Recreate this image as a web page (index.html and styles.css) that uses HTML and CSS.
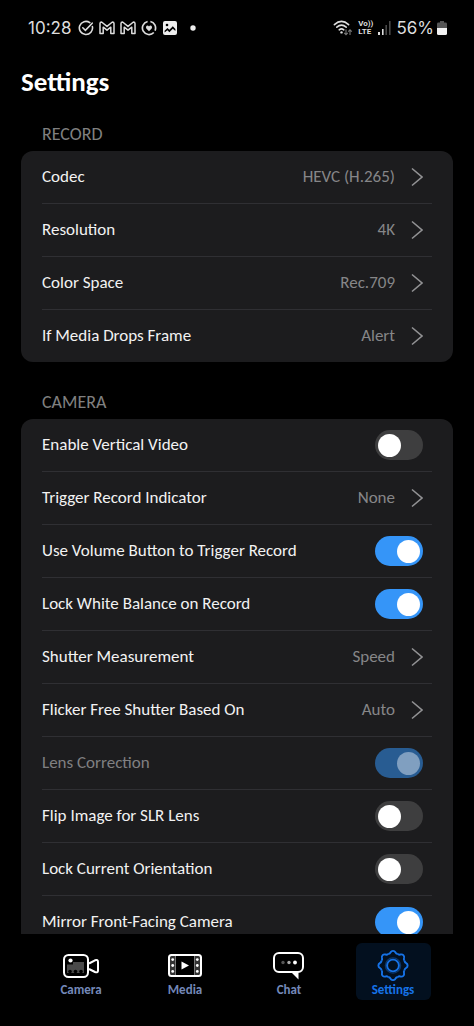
FILE: index.html
```html
<!DOCTYPE html>
<html lang="en">
<head>
<meta charset="utf-8">
<meta name="viewport" content="width=device-width, initial-scale=1">
<title>Settings</title>
<link rel="stylesheet" href="styles.css">
</head>
<body>
<div class="app">
  <header class="status">
    <div class="status-side">
      <span class="clock">10:28</span>
      <div class="notices">
        <svg width="16" height="16" viewBox="0 0 16 16" fill="none" stroke="#ddd" stroke-width="1.6" stroke-linecap="round"><path d="M11.8 2.6A6.6 6.6 0 1 0 14.4 6.6"/><path d="M4.8 7.8l2.6 2.6 6.8-7.2"/></svg>
        <svg width="16" height="16" viewBox="0 0 16 16" fill="none" stroke="#ddd" stroke-width="1.5" stroke-linejoin="round"><path d="M1 3.6Q1 2 2.6 2L8 6.4 13.4 2Q15 2 15 3.6V13.6H11.8V7.2L8 10.2 4.2 7.2V13.6H1Z"/></svg>
        <svg width="16" height="16" viewBox="0 0 16 16" fill="none" stroke="#ddd" stroke-width="1.5" stroke-linejoin="round"><path d="M1 3.6Q1 2 2.6 2L8 6.4 13.4 2Q15 2 15 3.6V13.6H11.8V7.2L8 10.2 4.2 7.2V13.6H1Z"/></svg>
        <svg width="16" height="16" viewBox="0 0 16 16" fill="none" stroke="#ddd" stroke-width="1.7"><path d="M9.4 1.5A6.6 6.6 0 0 1 14 10.6M12.8 12.5A6.6 6.6 0 1 1 6.6 1.5"/><path d="M8 11.2L5.3 8.4Q4.3 6.8 5.7 5.8 7 5.1 8 6.4 9 5.1 10.3 5.8 11.7 6.8 10.7 8.4Z" fill="#ddd" stroke="none"/></svg>
        <svg width="16" height="16" viewBox="0 0 16 16"><rect x="1" y="1" width="14" height="14" rx="2" fill="#eee"/><circle cx="5" cy="5" r="1.3" fill="#000"/><path d="M2.6 10.8L5.4 8 7.4 9.8 10.8 6.2 13.4 9V11L10.8 8.8 7.4 12.2 5.4 10.2 2.6 12.6Z" fill="#000"/></svg>
      </div>
      <svg width="6" height="6" viewBox="0 0 6 6"><circle cx="3" cy="3" r="2.7" fill="#eee"/></svg>
    </div>
    <div class="status-side signals">
      <svg width="20" height="16" viewBox="0 0 20 16" fill="none"><g stroke="#ddd" stroke-width="1.6" stroke-linecap="round"><path d="M1.4 4.6Q8.5-1.8 15.6 4.6"/><path d="M3.8 7.2Q8.5 3.2 13.2 7.2"/><path d="M6.2 9.8Q8.5 7.9 10.8 9.8"/></g><circle cx="8.5" cy="12.4" r="1.2" fill="#ddd"/><path d="M13 9.4V14.6M11.2 12.8L13 14.6 14.8 12.8M17 15V9.8M15.2 11.6L17 9.8 18.8 11.6" stroke="#777" stroke-width="1.1"/></svg>
      <span class="volte"><span>Vo))</span><span>LTE</span></span>
      <svg width="13" height="14" viewBox="0 0 13 14"><path fill="#ddd" d="M0 11h2v3H0zM4 8h1.6v6H4z"/><path fill="#484848" d="M7.4 4H9v10H7.4zM11 0h1.6v14H11z"/></svg>
      <span class="percent">56%</span>
      <svg width="10" height="14" viewBox="0 0 10 14"><path d="M3 0H7V1.6H8.5Q10 1.6 10 3V7H0V3Q0 1.6 1.5 1.6H3Z" fill="#555"/><path d="M0 7H10V12.5Q10 14 8.5 14H1.5Q0 14 0 12.5Z" fill="#f2f2f2"/></svg>
    </div>
  </header>

  <main class="content">
    <h1 class="title">Settings</h1>

    <section class="group">
      <h2 class="group-title">RECORD</h2>
      <div class="card">
        <button class="row" type="button"><span>Codec</span><span class="value">HEVC (H.265)</span><svg class="chevron" viewBox="0 0 12 20"><path d="M1 1.5L11 10 1 18.5"/></svg></button>
        <button class="row" type="button"><span>Resolution</span><span class="value">4K</span><svg class="chevron" viewBox="0 0 12 20"><path d="M1 1.5L11 10 1 18.5"/></svg></button>
        <button class="row" type="button"><span>Color Space</span><span class="value">Rec.709</span><svg class="chevron" viewBox="0 0 12 20"><path d="M1 1.5L11 10 1 18.5"/></svg></button>
        <button class="row" type="button"><span>If Media Drops Frame</span><span class="value">Alert</span><svg class="chevron" viewBox="0 0 12 20"><path d="M1 1.5L11 10 1 18.5"/></svg></button>
      </div>
    </section>

    <section class="group">
      <h2 class="group-title">CAMERA</h2>
      <div class="card">
        <label class="row"><span>Enable Vertical Video</span><input class="switch" type="checkbox" role="switch"></label>
        <button class="row" type="button"><span>Trigger Record Indicator</span><span class="value">None</span><svg class="chevron" viewBox="0 0 12 20"><path d="M1 1.5L11 10 1 18.5"/></svg></button>
        <label class="row"><span>Use Volume Button to Trigger Record</span><input class="switch" type="checkbox" role="switch" checked></label>
        <label class="row"><span>Lock White Balance on Record</span><input class="switch" type="checkbox" role="switch" checked></label>
        <button class="row" type="button"><span>Shutter Measurement</span><span class="value">Speed</span><svg class="chevron" viewBox="0 0 12 20"><path d="M1 1.5L11 10 1 18.5"/></svg></button>
        <button class="row" type="button"><span>Flicker Free Shutter Based On</span><span class="value">Auto</span><svg class="chevron" viewBox="0 0 12 20"><path d="M1 1.5L11 10 1 18.5"/></svg></button>
        <label class="row disabled"><span>Lens Correction</span><input class="switch" type="checkbox" role="switch" checked disabled></label>
        <label class="row"><span>Flip Image for SLR Lens</span><input class="switch" type="checkbox" role="switch"></label>
        <label class="row"><span>Lock Current Orientation</span><input class="switch" type="checkbox" role="switch"></label>
        <label class="row"><span>Mirror Front-Facing Camera</span><input class="switch" type="checkbox" role="switch" checked></label>
      </div>
    </section>
  </main>

  <nav class="tabs">
    <a class="tab" href="#camera">
      <svg width="38" height="32" viewBox="0 0 38 32" fill="none"><rect x="2" y="6" width="24" height="22" rx="4.5" stroke="#fff" stroke-width="2"/><path d="M27 14.5L33 11.3Q36 10.2 36 13V21.5Q36 24.2 33 23L27 20" stroke="#fff" stroke-width="2" stroke-linejoin="round"/><path d="M11 13H22V24H5V15.5H11Z" fill="#4a4a4a"/><circle cx="8.5" cy="11.5" r="2.1" fill="#fff"/><g fill="#000"><circle cx="8" cy="22.5" r="1.8"/><circle cx="13.5" cy="22.5" r="1.8"/><circle cx="19" cy="22.5" r="1.8"/></g></svg>
      <span>Camera</span>
    </a>
    <a class="tab" href="#media">
      <svg width="38" height="32" viewBox="0 0 38 32" fill="none"><path d="M4 7H9V26H4zM29 7H34V26H29z" fill="#333"/><path d="M9.5 7V26M28.5 7V26" stroke="#777" stroke-width="1"/><rect x="3" y="6" width="32" height="21" rx="2.5" stroke="#fff" stroke-width="2"/><path d="M15.5 12.5L23 16.5 15.5 20.5Z" fill="#fff"/><g fill="#fff"><circle cx="6.7" cy="10.6" r="1.4"/><circle cx="6.7" cy="16.5" r="1.4"/><circle cx="6.7" cy="22.4" r="1.4"/><circle cx="31.3" cy="10.6" r="1.4"/><circle cx="31.3" cy="16.5" r="1.4"/><circle cx="31.3" cy="22.4" r="1.4"/></g></svg>
      <span>Media</span>
    </a>
    <a class="tab" href="#chat">
      <svg width="38" height="32" viewBox="0 0 38 32" fill="none"><rect x="4" y="4" width="29" height="19" rx="5" stroke="#fff" stroke-width="2"/><path d="M21.5 23.5H28.5V30.5Z" fill="#fff"/><circle cx="13" cy="13.5" r="1.7" fill="#555"/><circle cx="19" cy="13.5" r="1.7" fill="#aaa"/><circle cx="25" cy="13.5" r="1.9" fill="#fff"/></svg>
      <span>Chat</span>
    </a>
    <a class="tab active" href="#settings" aria-current="page">
      <svg width="38" height="32" viewBox="-19 -16.5 38 32" fill="none" stroke="#1673e8" stroke-width="1.9">
        <path id="tooth" d="M-4.75-11.5Q-3-11.8-2.4-13.2-1.6-14.6 0-14.6 1.6-14.6 2.4-13.2 3-11.8 4.75-11.5"/>
        <use href="#tooth" transform="rotate(45)"/><use href="#tooth" transform="rotate(90)"/><use href="#tooth" transform="rotate(135)"/><use href="#tooth" transform="rotate(180)"/><use href="#tooth" transform="rotate(225)"/><use href="#tooth" transform="rotate(270)"/><use href="#tooth" transform="rotate(315)"/>
        <circle r="7.6" stroke="#0b376c" stroke-width="1.4"/><circle r="5.9"/>
      </svg>
      <span>Settings</span>
    </a>
  </nav>
</div>
</body>
</html>
```
FILE: styles.css
```css
* {
  box-sizing: border-box;
}

body {
  margin: 0;
  background: #000;
  color: #f2f2f2;
  font-family: Carlito, Lato, "Open Sans", sans-serif;
  font-size: 17px;
  line-height: 20px;
}

.app {
  display: flex;
  flex-direction: column;
  height: 100vh;
}

svg {
  flex: none;
}

.status {
  display: flex;
  justify-content: space-between;
  align-items: center;
  height: 56px;
  padding: 0 27px 0 28px;
  color: #ddd;
  font-family: Inter, Roboto, sans-serif;
  font-size: 17px;
}

.status-side {
  display: flex;
  align-items: center;
  gap: 12px;
}

.notices {
  display: flex;
  gap: 5px;
  margin-left: -5px;
}

.signals {
  gap: 5px;
}

.percent {
  margin-right: -2px;
}

.volte {
  display: flex;
  flex-direction: column;
  font-family: Roboto, sans-serif;
  font-size: 8px;
  font-weight: 700;
  line-height: 8px;
}

.content {
  flex: 1;
  min-height: 0;
  overflow: hidden;
  padding: 10px 21px 0;
}

.title {
  margin: 0;
  font-size: 27px;
  font-weight: 700;
  line-height: 32px;
  color: #fff;
}

.group {
  padding-top: 26px;
}

.group + .group {
  padding-top: 30px;
}

.group-title {
  margin: 0;
  padding: 0 21px 7px;
  color: #808080;
  font-size: 18px;
  font-weight: 400;
}

.card {
  padding: 0 21px;
  border-radius: 12px;
  background: #1c1c1e;
}

.row {
  display: flex;
  align-items: center;
  width: 100%;
  height: 53px;
  padding: 0 9px 0 0;
  border: 0;
  border-top: 1px solid #2f2f33;
  background: none;
  color: inherit;
  font: inherit;
  text-align: left;
}

.row:first-child {
  height: 52px;
  border-top: 0;
}

.row > :first-child {
  flex: 1;
}

.value {
  color: #868688;
}

.chevron {
  width: 12px;
  height: 20px;
  margin-left: 16px;
  fill: none;
  stroke: #929294;
  stroke-width: 1.6;
}

.switch {
  appearance: none;
  display: flex;
  align-items: center;
  width: 48px;
  height: 30px;
  margin: 0;
  padding: 0 3px;
  border-radius: 15px;
  background: #3e3e3f;
}

.switch::before {
  content: "";
  width: 23px;
  height: 23px;
  border-radius: 50%;
  background: #fff;
}

.switch:checked {
  justify-content: flex-end;
  background: #3595f8;
}

.disabled {
  color: #808082;
}

.switch:disabled {
  background: #285c92;
}

.switch:disabled::before {
  background: #809fc0;
}

.tabs {
  display: grid;
  grid-template-columns: repeat(4, 1fr);
  justify-items: center;
  padding: 9px 29px 26px;
}

.tab {
  display: flex;
  flex-direction: column;
  align-items: center;
  width: 75px;
  height: 57px;
  padding-top: 6px;
  border-radius: 6px;
  color: #7388b8;
  font-size: 13px;
  font-weight: 700;
  line-height: 18px;
  text-decoration: none;
}

.active {
  background: #03101f;
  color: #1673e8;
}
```
